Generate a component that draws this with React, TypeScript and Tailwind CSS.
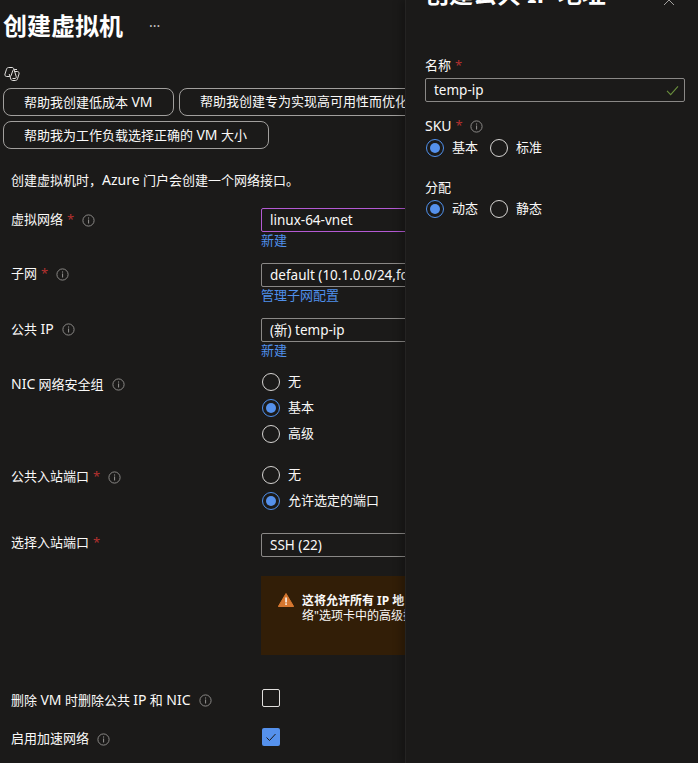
import React from "react";

const Info = () => (
  <svg viewBox="0 0 13 13" className="w-[13px] h-[13px] shrink-0" fill="none">
    <circle cx="6.5" cy="6.5" r="5.6" stroke="#8a8886" strokeWidth="1" />
    <rect x="6" y="5.5" width="1.1" height="4" fill="#8a8886" />
    <rect x="6" y="3.4" width="1.1" height="1.2" fill="#8a8886" />
  </svg>
);

const Star = () => <span className="text-[#b3312f] ml-[4px]">*</span>;

const L = ({ children }: { children: React.ReactNode }) => <span className="text-[14px]">{children}</span>;

const Label = ({ text, req, info, gap = 8 }: { text: React.ReactNode; req?: boolean; info?: boolean; gap?: number }) => (
  <div className="flex items-center h-[20px] text-[13px] text-[#faf9f8] whitespace-nowrap">
    <span>{text}</span>
    {req && <Star />}
    {info && <span style={{ marginLeft: gap }} className="flex"><Info /></span>}
  </div>
);

const Radio = ({ on, text }: { on?: boolean; text: string }) => (
  <div className="flex items-center h-[20px] text-[13px] text-[#faf9f8]">
    <span className={`w-[18px] h-[18px] rounded-full border flex items-center justify-center shrink-0 ${on ? "border-[#4f8fea]" : "border-[#d6d4d2]"}`}>
      {on && <span className="w-[10px] h-[10px] rounded-full bg-[#5591ec]" />}
    </span>
    <span className="ml-[8px] whitespace-nowrap">{text}</span>
  </div>
);

const Field = ({ value, purple }: { value: string; purple?: boolean }) => (
  <div className={`h-[24px] w-[300px] border rounded-[2px] pl-[8px] flex items-center text-[13.5px] text-[#faf9f8] whitespace-nowrap ${purple ? "border-[#b45ad3]" : "border-[#8a8886]"}`}>
    {value}
  </div>
);

const Pill = ({ children, className = "" }: { children: React.ReactNode; className?: string }) => (
  <div className={`h-[28px] border border-[#a19f9d] rounded-[8px] flex items-center text-[13px] text-[#faf9f8] whitespace-pre shrink-0 ${className}`}>
    {children}
  </div>
);

const Row = ({ h, left, children }: { h: number; left: React.ReactNode; children?: React.ReactNode }) => (
  <div style={{ height: h }} className="grid grid-cols-[250px_1fr] pl-[11px]">
    <div>{left}</div>
    <div className="min-w-0">{children}</div>
  </div>
);

const Link = ({ children }: { children: React.ReactNode }) => (
  <div className="h-[16px] text-[13px] leading-[16px] text-[#4f8fea] whitespace-nowrap">{children}</div>
);

export default function App() {
  return (
    <div
      className="w-[698px] h-[763px] overflow-hidden flex bg-[#1b1a19]"
      style={{ fontFamily: '"Noto Sans","Noto Sans CJK SC",sans-serif' }}
    >
      <main className="w-[405px] shrink-0 overflow-hidden h-full">
        <header className="flex items-center h-[50px] pl-[3px] pt-[1px]">
          <h1 className="text-[24px] font-bold leading-[32px] text-white">创建虚拟机</h1>
          <span className="ml-[26px] text-[14px] text-[#c8c6c4] leading-none">···</span>
        </header>

        <div className="pl-[4px] mt-[16px] h-[22px]">
          <svg viewBox="0 0 16 16" className="w-[16px] h-[16px]" fill="none" stroke="#e1dfdd" strokeWidth="1">
            <path d="M4.500 1.500H8C9 1.500 9.600 2 9.900 3L12.200 10.500C12.500 11.500 12 12.500 11 12.500H8.500" />
            <path d="M4.500 1.500C3.500 1.500 2.800 2.200 2.500 3.200L1 8C.6 9.300 1.300 10.500 2.700 10.500H5.500C6.500 10.500 7 10 7.300 9L8.700 5C9 4 9.600 3.500 10.500 3.500H13" />
            <path d="M5.200 8 L6.800 13C7.100 14 7.700 14.500 8.700 14.500H11.500C12.500 14.500 13.200 13.800 13.500 12.800L15 8C15.400 6.700 14.700 5.500 13.300 5.500H10.500" />
          </svg>
        </div>

        <div className="pl-[3px] flex gap-[5px]">
          <Pill className="w-[171px] pl-[20px]"><span>帮助我创建低成本 <L>VM</L></span></Pill>
          <Pill className="w-[300px] pl-[20px]">帮助我创建专为实现高可用性而优化</Pill>
        </div>
        <div className="pl-[3px] mt-[5px]">
          <Pill className="w-[266px] pl-[20px]"><span>帮助我为工作负载选择正确的 <L>VM</L> 大小</span></Pill>
        </div>

        <p className="pl-[11px] mt-[21px] h-[38px] text-[13px] leading-[20px] text-[#faf9f8] whitespace-nowrap">
          创建虚拟机时，<L>Azure</L> 门户会创建一个网络接口。
        </p>

        <Row h={55} left={<div className="pt-[2px]"><Label text="虚拟网络" req info /></div>}>
          <Field value="linux-64-vnet" purple />
          <Link>新建</Link>
        </Row>
        <Row h={55} left={<div className="pt-[1px]"><Label text="子网" req info /></div>}>
          <Field value="default (10.1.0.0/24,fd00::/64)" />
          <Link>管理子网配置</Link>
        </Row>
        <Row h={54} left={<div className="pt-[1px]"><Label text={<>公共 <L>IP</L></>} info /></div>}>
          <Field value="(新) temp-ip" />
          <Link>新建</Link>
        </Row>
        <Row h={93} left={<div className="pt-[2px]"><Label text={<><L>NIC</L> 网络安全组</>} info /></div>}>
          <div className="flex flex-col gap-[6px] pl-[1px]">
            <Radio text="无" />
            <Radio on text="基本" />
            <Radio text="高级" />
          </div>
        </Row>
        <Row h={68} left={<div className="pt-[2px]"><Label text="公共入站端口" req info /></div>}>
          <div className="flex flex-col gap-[6px] pl-[1px]">
            <Radio text="无" />
            <Radio on text="允许选定的端口" />
          </div>
        </Row>
        <Row h={43} left={<Label text="选择入站端口" req />}>
          <Field value="SSH (22)" />
        </Row>
        <Row h={113} left={null}>
          <div className="h-[79px] w-[300px] bg-[#321e07] pt-[17px] pl-[17px] flex items-start overflow-hidden">
            <svg viewBox="0 0 16 14" className="w-[16px] h-[14px] shrink-0">
              <path d="M8 0.500 L15.700 13.500 H0.300 Z" fill="#d67730" stroke="#d67730" strokeLinejoin="round" />
              <rect x="7.300" y="4.500" width="1.500" height="5" fill="#fff" />
              <rect x="7.300" y="10.300" width="1.500" height="1.600" fill="#fff" />
            </svg>
            <div className="ml-[8px] text-[12px] leading-[15px] text-[#faf9f8] whitespace-nowrap">
              <div className="font-bold">这将允许所有 IP 地</div>
              <div>络"选项卡中的高级控</div>
            </div>
          </div>
        </Row>
        <Row h={39} left={<div className="pt-[1px]"><Label text={<>删除 <L>VM</L> 时删除公共 <L>IP</L> 和 <L>NIC</L></>} info gap={9} /></div>}>
          <div className="w-[18px] h-[18px] ml-[1px] border border-[#e1dfdd] rounded-[2px]" />
        </Row>
        <Row h={24} left={<div className="pt-[1px]"><Label text="启用加速网络" info /></div>}>
          <div className="w-[18px] h-[18px] ml-[1px] bg-[#5591ec] rounded-[2px] flex items-center justify-center">
            <svg viewBox="0 0 12 12" className="w-[12px] h-[12px]" fill="none" stroke="#1b1a19" strokeWidth="1">
              <path d="M1.500 6.500 L4.500 9.500 L10.500 3" />
            </svg>
          </div>
        </Row>
      </main>

      <aside className="flex-1 min-w-0 h-full border-l border-[#242322] shadow-[-4px_0_8px_rgba(0,0,0,0.25)] pl-[19px] pr-[13px]">
        <div className="flex justify-between h-[8px]">
          <h2 className="text-[24px] font-bold leading-[32px] -mt-[22px] text-white whitespace-nowrap">创建公共 IP 地址</h2>
          <svg viewBox="0 0 12 12" className="w-[12px] h-[12px] -mt-[6px] mr-[10px]" fill="none" stroke="#a19f9d" strokeWidth="1">
            <path d="M1 1 L11 11 M11 1 L1 11" />
          </svg>
        </div>

        <div className="mt-[48px]"><Label text="名称" req /></div>
        <div className="mt-[2px] h-[24px] border border-[#8a8886] rounded-[2px] pl-[8px] pr-[5px] flex items-center justify-between text-[13.5px] text-[#faf9f8]">
          <span>temp-ip</span>
          <svg viewBox="0 0 14 12" className="w-[13px] h-[11px]" fill="none" stroke="#6a8e3d" strokeWidth="1.200">
            <path d="M1 6.500 L5 10.500 L13 1.500" />
          </svg>
        </div>

        <div className="mt-[14px]"><Label text={<L>SKU</L>} req info gap={7} /></div>
        <div className="flex gap-[12px] mt-[2px] pl-[1px]">
          <Radio on text="基本" />
          <Radio text="标准" />
        </div>

        <div className="mt-[20px]"><Label text="分配" /></div>
        <div className="flex gap-[12px] mt-[1px] pl-[1px]">
          <Radio on text="动态" />
          <Radio text="静态" />
        </div>
      </aside>
    </div>
  );
}
